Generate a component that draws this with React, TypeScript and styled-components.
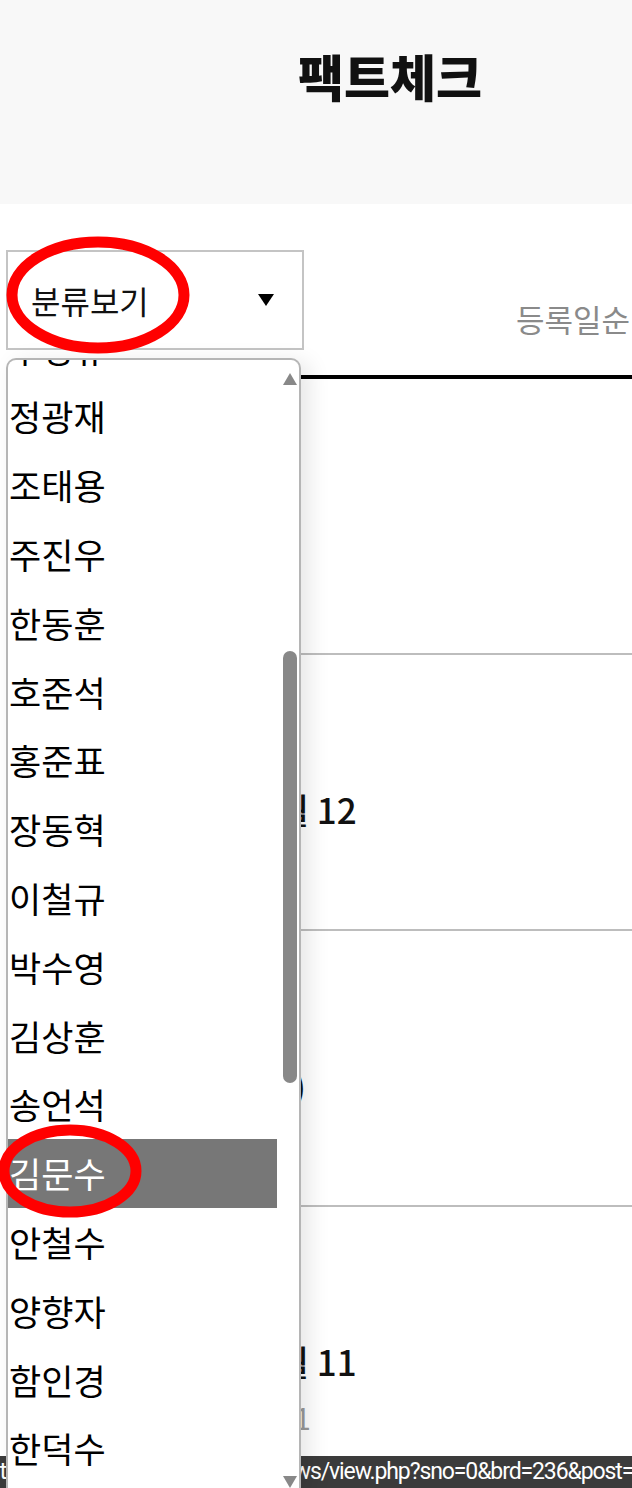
import React from 'react';
import styled, { createGlobalStyle } from 'styled-components';

const GlobalStyle = createGlobalStyle`
  html, body {
    margin: 0;
    padding: 0;
    background: #fff;
  }
  body {
    font-family: "Noto Sans CJK KR", "Noto Sans", sans-serif;
    overflow: hidden;
  }
`;

// 분류 목록 (위쪽 일부는 스크롤되어 잘려 보임)
const categories = [
  '추경규',
  '정광재',
  '조태용',
  '주진우',
  '한동훈',
  '호준석',
  '홍준표',
  '장동혁',
  '이철규',
  '박수영',
  '김상훈',
  '송언석',
  '김문수',
  '안철수',
  '양향자',
  '함인경',
  '한덕수',
  '권성동',
];

type Article = {
  title: string;
  date: string;
};

const articles: Article[] = [
  { title: '팩트체크 라이브', date: '2025.05.13' },
  { title: '대선 후보 토론 5월 12', date: '2025.05.12' },
  { title: '토론회 검증 (종합)', date: '2025.05.12' },
  { title: '대선 후보 토론 5월 11', date: '기사입력 2025.05.11' },
];

const Page = styled.div`
  position: relative;
  width: 632px;
  height: 1488px;
  overflow: hidden;
`;

const Header = styled.header`
  box-sizing: border-box;
  height: 204px;
  background: #f8f8f8;
  display: flex;
  justify-content: center;
  padding: 47px 0 0 148px;
`;

const Title = styled.h1`
  margin: 0;
  font-size: 50px;
  font-weight: 900;
  line-height: 56px;
  color: #111;
`;

const Main = styled.main`
  padding: 46px 0 0 6px;
`;

const Toolbar = styled.div`
  display: flex;
  justify-content: space-between;
  align-items: flex-start;
  height: 100px;
`;

const FilterArea = styled.div`
  position: relative;
  width: 298px;
  height: 100px;
`;

const SelectBox = styled.div`
  box-sizing: border-box;
  width: 298px;
  height: 100px;
  border: 2px solid #c4c4c4;
  display: flex;
  align-items: center;
  justify-content: space-between;
  padding: 0 28px 0 23px;
  font-size: 32px;
  color: #111;
`;

const Caret = styled.span`
  width: 0;
  height: 0;
  border-left: 8.5px solid transparent;
  border-right: 8.5px solid transparent;
  border-top: 12px solid #000;
`;

const SortLabel = styled.div`
  margin-top: 53px;
  padding-right: 2px;
  font-size: 31px;
  line-height: 32px;
  color: #8a8a8a;
`;

const ArticleList = styled.ul`
  list-style: none;
  margin: 25px 0 0;
  padding: 0;
  border-top: 4px solid #000;
`;

const ArticleRow = styled.li`
  height: 141px;
  padding: 133px 0 0 34px;
  border-bottom: 2px solid #bdbdbd;
  display: flex;
  flex-direction: column;
`;

const ArticleTitle = styled.div`
  font-size: 35px;
  line-height: 42px;
  font-weight: 500;
  color: #111;
  white-space: nowrap;
`;

const ArticleDate = styled.div`
  margin-top: 18px;
  padding-left: 4px;
  font-size: 30px;
  line-height: 34px;
  color: #999;
  white-space: nowrap;
`;

const Dropdown = styled.div`
  position: absolute;
  top: 108px;
  left: 0;
  z-index: 3;
  box-sizing: border-box;
  width: 295px;
  height: 1134px;
  display: flex;
  background: #fff;
  border: 2px solid #b5b5b5;
  border-bottom: none;
  border-radius: 10px 10px 0 0;
  box-shadow: 8px 4px 22px rgba(0, 0, 0, 0.1);
  overflow: hidden;
`;

const Options = styled.ul`
  list-style: none;
  flex: none;
  width: 269px;
  margin: -46.4px 0 0;
  padding: 0;
`;

const Option = styled.li<{ $active?: boolean }>`
  height: 68.8px;
  line-height: 68.8px;
  padding-left: 1px;
  font-size: 35px;
  white-space: nowrap;
  color: ${(p) => (p.$active ? '#fff' : '#000')};
  background: ${(p) => (p.$active ? '#777' : 'transparent')};
`;

const ScrollTrack = styled.div`
  flex: 1;
  display: flex;
  flex-direction: column;
  align-items: center;
  padding: 13px 0 4px 4px;
`;

const ArrowUp = styled.span`
  width: 0;
  height: 0;
  border-left: 7px solid transparent;
  border-right: 7px solid transparent;
  border-bottom: 12px solid #888;
`;

const ArrowDown = styled(ArrowUp)`
  margin-top: auto;
  border-bottom: none;
  border-top: 12px solid #888;
`;

const Thumb = styled.span<{ $offset: number; $size: number }>`
  width: 14px;
  border-radius: 7px;
  background: #888;
  margin-top: ${(p) => p.$offset}px;
  height: ${(p) => p.$size}px;
`;

const Mark = styled.svg<{ $x: number; $y: number }>`
  position: absolute;
  left: ${(p) => p.$x}px;
  top: ${(p) => p.$y}px;
  z-index: 4;
  overflow: visible;
  pointer-events: none;
`;

const StatusBar = styled.div`
  position: absolute;
  left: 0;
  right: 0;
  bottom: 0;
  z-index: 2;
  height: 32px;
  display: flex;
  background: #3b3b3b;
  color: #fff;
  font-family: Roboto, "Noto Sans", sans-serif;
  font-size: 23px;
  letter-spacing: -1.1px;
  line-height: 32px;
  white-space: nowrap;
  overflow: hidden;
`;

const StatusHost = styled.span`
  flex: none;
  width: 271px;
  overflow: hidden;
  text-indent: -12px;
`;

const StatusPath = styled.span`
  flex: none;
`;

function RedCircle({ x, y, rx, ry }: { x: number; y: number; rx: number; ry: number }) {
  const pad = 8;
  return (
    <Mark $x={x - rx - pad} $y={y - ry - pad} width={(rx + pad) * 2} height={(ry + pad) * 2}>
      <ellipse cx={rx + pad} cy={ry + pad} rx={rx} ry={ry} fill="none" stroke="#ff0000" strokeWidth={11} />
    </Mark>
  );
}

function CategoryDropdown() {
  return (
    <Dropdown>
      <Options>
        {categories.map((name) => (
          <Option key={name} $active={name === '김문수'}>
            {name}
          </Option>
        ))}
      </Options>
      <ScrollTrack>
        <ArrowUp />
        <Thumb $offset={266} $size={432} />
        <ArrowDown />
      </ScrollTrack>
    </Dropdown>
  );
}

export default function App() {
  return (
    <>
      <GlobalStyle />
      <Page>
        <Header>
          <Title>팩트체크</Title>
        </Header>
        <Main>
          <Toolbar>
            <FilterArea>
              <SelectBox>
                <span>분류보기</span>
                <Caret />
              </SelectBox>
              <CategoryDropdown />
              <RedCircle x={92} y={45} rx={86} ry={53} />
              <RedCircle x={64} y={921} rx={66} ry={41} />
            </FilterArea>
            <SortLabel>등록일순</SortLabel>
          </Toolbar>
          <ArticleList>
            {articles.map((a) => (
              <ArticleRow key={a.title}>
                <ArticleTitle>{a.title}</ArticleTitle>
                <ArticleDate>{a.date}</ArticleDate>
              </ArticleRow>
            ))}
          </ArticleList>
        </Main>
        <StatusBar>
          <StatusHost>https://www.factcheck.kr/</StatusHost>
          <StatusPath>news/view.php?sno=0&amp;brd=236&amp;post=1425</StatusPath>
        </StatusBar>
      </Page>
    </>
  );
}
